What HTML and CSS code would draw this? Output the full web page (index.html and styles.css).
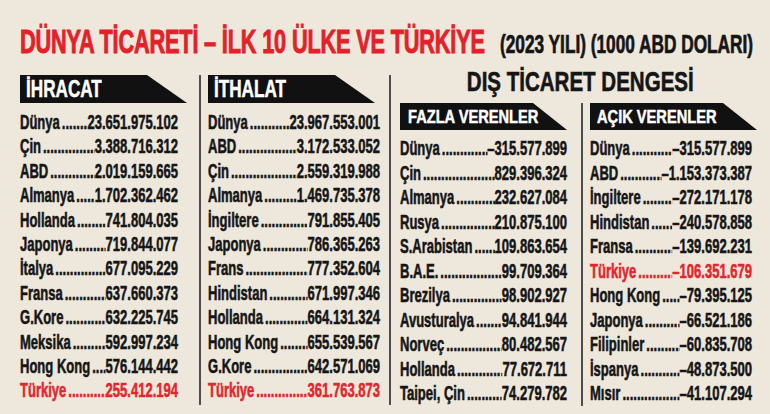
FILE: index.html
```html
<!DOCTYPE html>
<html lang="tr">
<head>
<meta charset="utf-8">
<title>Dünya Ticareti</title>
<link rel="stylesheet" href="styles.css">
</head>
<body>
<div class="page">
  <h1 class="title">
    <span class="t-red"><span class="sx">DÜNYA TİCARETİ – İLK 10 ÜLKE VE TÜRKİYE</span></span>
    <span class="t-black"><span class="sx">(2023 YILI) (1000 ABD DOLARI)</span></span>
  </h1>
  <div class="board">
    <section class="col c1">
      <div class="tag"><span class="sx">İHRACAT</span></div>
      <div class="list">
        <div class="row"><span class="k">Dünya</span><span class="d"></span><span class="v">23.651.975.102</span></div>
        <div class="row"><span class="k">Çin</span><span class="d"></span><span class="v">3.388.716.312</span></div>
        <div class="row"><span class="k">ABD</span><span class="d"></span><span class="v">2.019.159.665</span></div>
        <div class="row"><span class="k">Almanya</span><span class="d"></span><span class="v">1.702.362.462</span></div>
        <div class="row"><span class="k">Hollanda</span><span class="d"></span><span class="v">741.804.035</span></div>
        <div class="row"><span class="k">Japonya</span><span class="d"></span><span class="v">719.844.077</span></div>
        <div class="row"><span class="k">İtalya</span><span class="d"></span><span class="v">677.095.229</span></div>
        <div class="row"><span class="k">Fransa</span><span class="d"></span><span class="v">637.660.373</span></div>
        <div class="row"><span class="k">G.Kore</span><span class="d"></span><span class="v">632.225.745</span></div>
        <div class="row"><span class="k">Meksika</span><span class="d"></span><span class="v">592.997.234</span></div>
        <div class="row"><span class="k">Hong Kong</span><span class="d"></span><span class="v">576.144.442</span></div>
        <div class="row red"><span class="k">Türkiye</span><span class="d"></span><span class="v">255.412.194</span></div>
      </div>
    </section>
    <section class="col c2">
      <div class="tag"><span class="sx">İTHALAT</span></div>
      <div class="list">
        <div class="row"><span class="k">Dünya</span><span class="d"></span><span class="v">23.967.553.001</span></div>
        <div class="row"><span class="k">ABD</span><span class="d"></span><span class="v">3.172.533.052</span></div>
        <div class="row"><span class="k">Çin</span><span class="d"></span><span class="v">2.559.319.988</span></div>
        <div class="row"><span class="k">Almanya</span><span class="d"></span><span class="v">1.469.735.378</span></div>
        <div class="row"><span class="k">İngiltere</span><span class="d"></span><span class="v">791.855.405</span></div>
        <div class="row"><span class="k">Japonya</span><span class="d"></span><span class="v">786.365.263</span></div>
        <div class="row"><span class="k">Frans</span><span class="d"></span><span class="v">777.352.604</span></div>
        <div class="row"><span class="k">Hindistan</span><span class="d"></span><span class="v">671.997.346</span></div>
        <div class="row"><span class="k">Hollanda</span><span class="d"></span><span class="v">664.131.324</span></div>
        <div class="row"><span class="k">Hong Kong</span><span class="d"></span><span class="v">655.539.567</span></div>
        <div class="row"><span class="k">G.Kore</span><span class="d"></span><span class="v">642.571.069</span></div>
        <div class="row red"><span class="k">Türkiye</span><span class="d"></span><span class="v">361.763.873</span></div>
      </div>
    </section>
    <section class="bal">
      <h2 class="bal-title"><span class="sxc">DIŞ TİCARET DENGESİ</span></h2>
      <div class="bal-cols">
        <section class="col c3">
          <div class="tag"><span class="sx">FAZLA VERENLER</span></div>
          <div class="list">
            <div class="row"><span class="k">Dünya</span><span class="d"></span><span class="v">–315.577.899</span></div>
            <div class="row"><span class="k">Çin</span><span class="d"></span><span class="v">829.396.324</span></div>
            <div class="row"><span class="k">Almanya</span><span class="d"></span><span class="v">232.627.084</span></div>
            <div class="row"><span class="k">Rusya</span><span class="d"></span><span class="v">210.875.100</span></div>
            <div class="row"><span class="k">S.Arabistan</span><span class="d"></span><span class="v">109.863.654</span></div>
            <div class="row"><span class="k">B.A.E.</span><span class="d"></span><span class="v">99.709.364</span></div>
            <div class="row"><span class="k">Brezilya</span><span class="d"></span><span class="v">98.902.927</span></div>
            <div class="row"><span class="k">Avusturalya</span><span class="d"></span><span class="v">94.841.944</span></div>
            <div class="row"><span class="k">Norveç</span><span class="d"></span><span class="v">80.482.567</span></div>
            <div class="row"><span class="k">Hollanda</span><span class="d"></span><span class="v">77.672.711</span></div>
            <div class="row"><span class="k">Taipei, Çin</span><span class="d"></span><span class="v">74.279.782</span></div>
          </div>
        </section>
        <section class="col c4">
          <div class="tag"><span class="sx">AÇIK VERENLER</span></div>
          <div class="list">
            <div class="row"><span class="k">Dünya</span><span class="d"></span><span class="v">–315.577.899</span></div>
            <div class="row"><span class="k">ABD</span><span class="d"></span><span class="v">–1.153.373.387</span></div>
            <div class="row"><span class="k">İngiltere</span><span class="d"></span><span class="v">–272.171.178</span></div>
            <div class="row"><span class="k">Hindistan</span><span class="d"></span><span class="v">–240.578.858</span></div>
            <div class="row"><span class="k">Fransa</span><span class="d"></span><span class="v">–139.692.231</span></div>
            <div class="row red"><span class="k">Türkiye</span><span class="d"></span><span class="v">–106.351.679</span></div>
            <div class="row"><span class="k">Hong Kong</span><span class="d"></span><span class="v">–79.395.125</span></div>
            <div class="row"><span class="k">Japonya</span><span class="d"></span><span class="v">–66.521.186</span></div>
            <div class="row"><span class="k">Filipinler</span><span class="d"></span><span class="v">–60.835.708</span></div>
            <div class="row"><span class="k">İspanya</span><span class="d"></span><span class="v">–48.873.500</span></div>
            <div class="row"><span class="k">Mısır</span><span class="d"></span><span class="v">–41.107.294</span></div>
          </div>
        </section>
      </div>
    </section>
  </div>
</div>
</body>
</html>
```
FILE: styles.css
```css
html, body {
  margin: 0;
  padding: 0;
}
body {
  width: 770px;
  height: 414px;
  overflow: hidden;
  background: #eee8dc;
  color: #151515;
  font-family: "Liberation Sans", "DejaVu Sans Condensed", sans-serif;
  font-weight: 700;
}
.page {
  padding-left: 20px;
}
.sx {
  display: inline-block;
  white-space: nowrap;
  transform-origin: 0 50%;
  transform: scaleX(var(--s, 1));
}
.sxc {
  display: inline-block;
  white-space: nowrap;
  transform-origin: 50% 50%;
  transform: scaleX(var(--s, 1));
}
.title {
  margin: 21px 0 0 0;
  display: flex;
  align-items: baseline;
  height: 40px;
  line-height: 40px;
  font-weight: 700;
  white-space: nowrap;
}
.t-red {
  width: 480px;
  font-size: 34px;
  color: #e32129;
  letter-spacing: -0.3px;
  -webkit-text-stroke: 1px #e32129;
  --s: 0.64;
}
.t-black {
  width: 256px;
  font-size: 25px;
  color: #151515;
  -webkit-text-stroke: 0.7px #151515;
  --s: 0.69;
}
.board {
  display: flex;
  margin-top: 14px;
  height: 330px;
}
.col {
  display: flex;
  flex-direction: column;
  min-width: 0;
}
.c1 {
  flex: none;
  width: 179px;
  border-right: 2px solid #4d4d4d;
  --w: 158px;
}
.c2 {
  flex: none;
  width: 181px;
  padding-left: 7px;
  border-right: 2px solid #4d4d4d;
  --w: 172px;
}
.bal {
  flex: 1;
  min-width: 0;
  display: flex;
  flex-direction: column;
}
.bal-title {
  margin: -7px 0 0 0;
  height: 28px;
  font-size: 27px;
  line-height: 28px;
  text-align: center;
  font-weight: 700;
  -webkit-text-stroke: 0.6px #151515;
  --s: 0.76;
}
.bal-cols {
  flex: 1;
  display: flex;
  margin-top: 7px;
}
.c3 {
  flex: none;
  width: 181px;
  padding-left: 9px;
  border-right: 2px solid #4d4d4d;
  --w: 167px;
}
.c4 {
  flex: none;
  width: 170px;
  padding-left: 7px;
  --w: 162px;
}
.tag {
  width: 167px;
  height: 28px;
  box-sizing: border-box;
  padding-left: 6px;
  background: #111;
  color: #fff;
  font-size: 23px;
  line-height: 29px;
  -webkit-text-stroke: 0.5px #fff;
  clip-path: polygon(0 0, calc(100% - 40px) 0, 100% 100%, 0 100%);
  --s: 0.745;
}
.c3 .tag, .c4 .tag {
  height: 27px;
  padding-left: 8px;
  font-size: 19px;
  line-height: 28px;
  --s: 0.77;
  clip-path: polygon(0 0, calc(100% - 34px) 0, 100% 100%, 0 100%);
}
.c4 .tag {
  padding-left: 7px;
}
.list {
  --ls: 0.668;
  margin-top: 7px;
  width: calc(var(--w) / var(--ls));
  transform: scaleX(var(--ls));
  transform-origin: 0 0;
  font-size: 19.5px;
  line-height: 24.4px;
  -webkit-text-stroke: 0.55px currentColor;
}
.c3 .list, .c4 .list {
  margin-top: 6px;
  line-height: 24.5px;
}
.row {
  display: flex;
  white-space: nowrap;
}
.k, .v {
  flex: none;
}
.d {
  flex: 1;
  min-width: 0;
  overflow: hidden;
  padding: 0 1px 0 3px;
}
.d::after {
  content: "..............................................................................";
}
.red {
  color: #e3252c;
}
```
